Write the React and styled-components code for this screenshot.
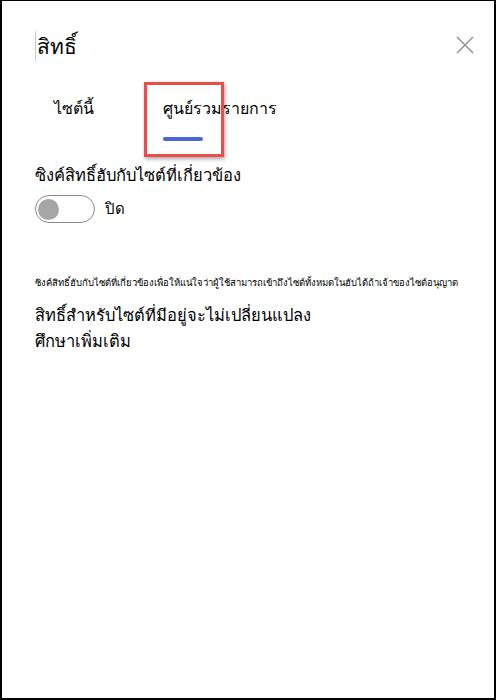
import React, { useState } from 'react'
import styled, { createGlobalStyle } from 'styled-components'

const GlobalStyle = createGlobalStyle`
  html, body {
    margin: 0;
    padding: 0;
    background: #ffffff;
  }
  body {
    font-family: Tahoma, "Noto Sans", "DejaVu Sans", sans-serif;
    color: #000;
  }
`

const Wrap = styled.div`
  position: relative;
`

const Frame = styled.div`
  box-sizing: border-box;
  width: 496px;
  height: 700px;
  border: 2px solid #000;
  border-top-width: 1px;
  background: #fff;
  padding: 30px 20px 0 33px;
`

const Header = styled.div`
  display: flex;
  justify-content: space-between;
  align-items: flex-start;
`

const Title = styled.h1`
  margin: 0;
  font-size: 21px;
  font-weight: 400;
  line-height: 30px;
  padding-left: 1px;
  border-left: 1px solid #c8c8c8;
`

const CloseButton = styled.button`
  border: none;
  background: none;
  padding: 0;
  margin-top: 5px;
  width: 18px;
  height: 18px;
  cursor: pointer;
`

const Tabs = styled.div`
  display: flex;
  gap: 69px;
  margin-top: 36px;
  padding-left: 19px;
`

const Tab = styled.button`
  position: relative;
  border: none;
  background: none;
  padding: 0 0 22px;
  font-family: inherit;
  font-size: 16px;
  line-height: 22px;
  color: #000;
  cursor: pointer;

  &::after {
    content: '';
    display: ${p => (p.$active ? 'block' : 'none')};
    position: absolute;
    left: 0;
    bottom: 0;
    width: 40px;
    height: 4px;
    border-radius: 2px;
    background: #4a67d8;
  }
`

const Highlight = styled.div`
  position: absolute;
  left: 144px;
  top: 82px;
  width: 80px;
  height: 75px;
  box-sizing: border-box;
  border: 3px solid #f04a4c;
  box-shadow: 1px 2px 4px rgba(0, 0, 0, 0.35);
  pointer-events: none;
`

const SectionLabel = styled.div`
  margin-top: 22px;
  font-size: 16.5px;
  line-height: 24px;
`

const ToggleRow = styled.div`
  display: flex;
  align-items: center;
  gap: 10px;
  margin-top: 8px;
`

const Switch = styled.button`
  position: relative;
  box-sizing: border-box;
  width: 60px;
  height: 28px;
  border: 1px solid #8a8a8a;
  border-radius: 14px;
  background: #fff;
  padding: 0;
  cursor: pointer;

  &::before {
    content: '';
    position: absolute;
    top: 3px;
    left: ${p => (p.$on ? '35px' : '2px')};
    width: 21px;
    height: 21px;
    border-radius: 50%;
    background: ${p => (p.$on ? '#4a67d8' : '#a6a6a6')};
  }
`

const SwitchLabel = styled.span`
  font-size: 15px;
`

const Note = styled.p`
  margin: 53px 0 0;
  font-size: 9.5px;
  line-height: 14px;
  white-space: nowrap;
`

const Body = styled.p`
  margin: 12px 0 0;
  font-size: 16.5px;
  line-height: 26px;
`

export default function App() {
  const [tab, setTab] = useState(1)
  const [on, setOn] = useState(false)

  return (
    <>
      <GlobalStyle />
      <Wrap>
        <Frame>
          <Header>
            <Title>สิทธิ์</Title>
            <CloseButton aria-label="ปิด">
              <svg width="18" height="18" viewBox="0 0 18 18">
                <path d="M1 1 L17 17 M17 1 L1 17" stroke="#8c8c8c" strokeWidth="1.4" fill="none" />
              </svg>
            </CloseButton>
          </Header>
          <Tabs>
            <Tab $active={tab === 0} onClick={() => setTab(0)}>ไซต์นี้</Tab>
            <Tab $active={tab === 1} onClick={() => setTab(1)}>ศูนย์รวมรายการ</Tab>
          </Tabs>
          <SectionLabel>ซิงค์สิทธิ์ฮับกับไซต์ที่เกี่ยวข้อง</SectionLabel>
          <ToggleRow>
            <Switch $on={on} onClick={() => setOn(!on)} />
            <SwitchLabel>{on ? 'เปิด' : 'ปิด'}</SwitchLabel>
          </ToggleRow>
          <Note>ซิงค์สิทธิ์ฮับกับไซต์ที่เกี่ยวข้องเพื่อให้แน่ใจว่าผู้ใช้สามารถเข้าถึงไซต์ทั้งหมดในฮับได้ถ้าเจ้าของไซต์อนุญาต</Note>
          <Body>
            สิทธิ์สำหรับไซต์ที่มีอยู่จะไม่เปลี่ยนแปลง
            <br />
            ศึกษาเพิ่มเติม
          </Body>
        </Frame>
        <Highlight />
      </Wrap>
    </>
  )
}
